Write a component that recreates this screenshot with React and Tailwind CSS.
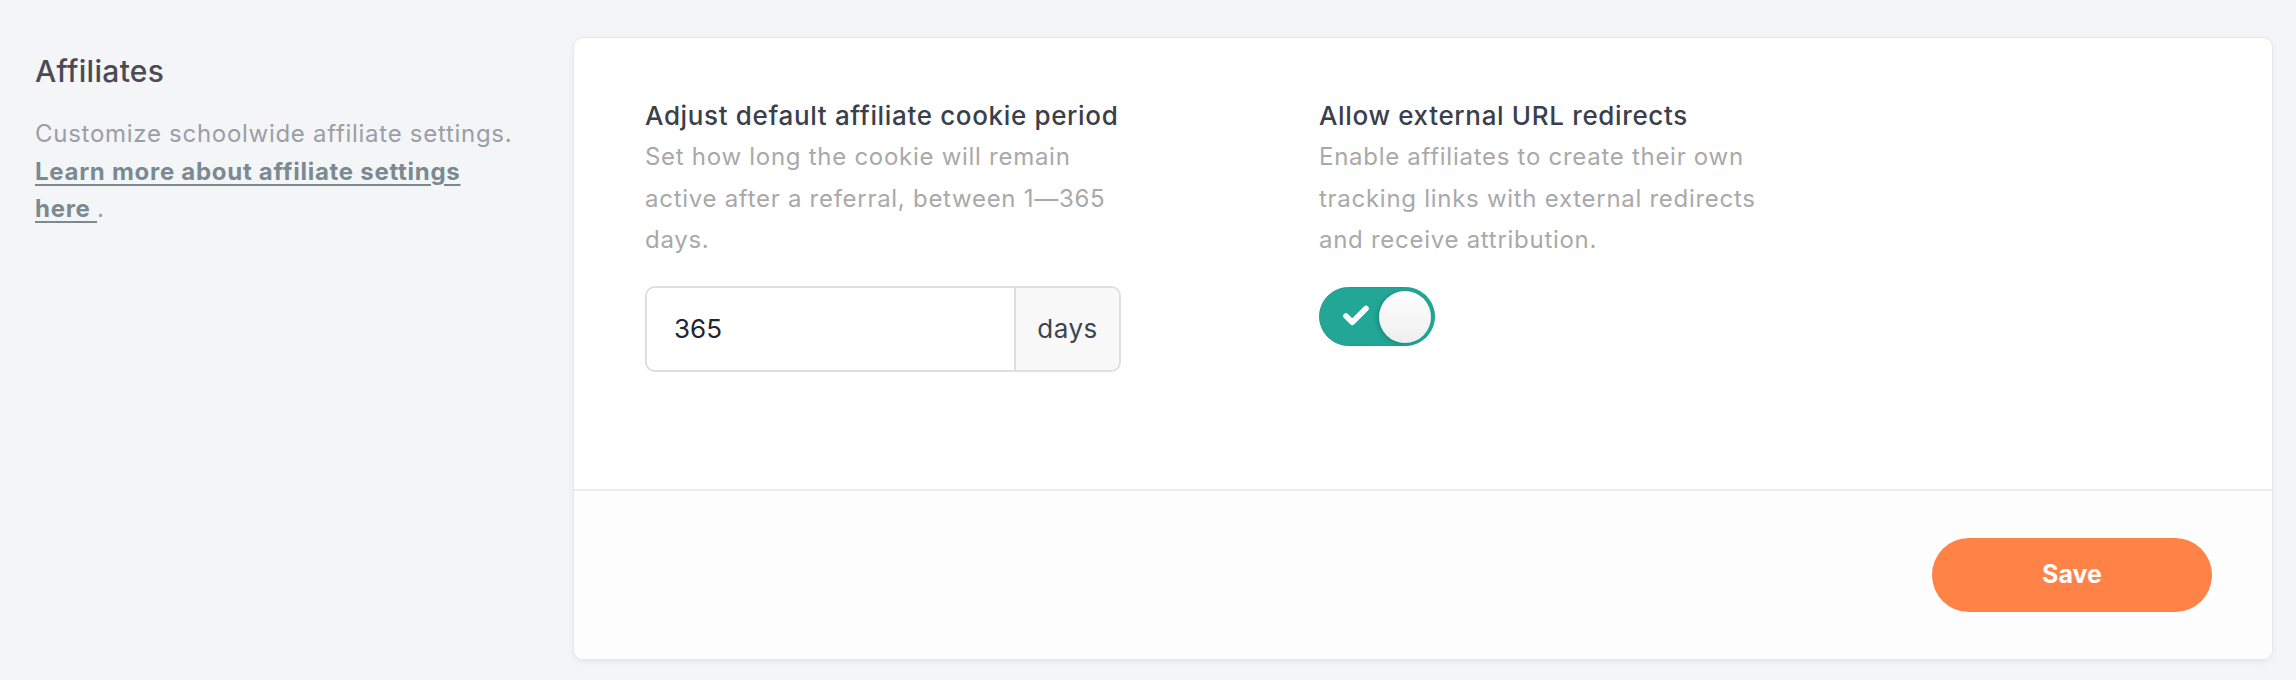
import { Check } from 'lucide-react';

export default function App() {
  return (
    <div
      className="min-h-screen bg-[#f4f5f7] flex pt-[37px] pl-[35px] pr-[23px] pb-[20px] text-[24px]"
      style={{ fontFamily: 'Inter, "Noto Sans", sans-serif' }}
    >
      {/* Section intro */}
      <div className="w-[500px] shrink-0 pt-[16px]">
        <h2 className="text-[30px] leading-[36px] font-medium text-[#4b4a55] tracking-[0.01em]">Affiliates</h2>
        <p className="mt-[26px] w-[486px] text-[24px] leading-[37.5px] text-[#9b9ea6] tracking-[0.03em]">
          Customize schoolwide affiliate settings.{' '}
          <a href="#" className="font-bold text-[#7b8a91] underline underline-offset-[4px] decoration-2">
            Learn more about affiliate settings here&nbsp;
          </a>
          .
        </p>
      </div>

      {/* Settings card */}
      <div className="ml-[38px] flex-1 flex flex-col bg-white rounded-[10px] border border-[#e6e7eb] shadow-[0_3px_6px_rgba(0,0,0,0.05)] overflow-hidden">
        <div className="grid grid-cols-[476px_476px] gap-x-[198px] px-[71px] pt-[61px] pb-[117px]">
          <div>
            <h3 className="text-[26px] leading-[34px] font-medium text-[#3a3f4b] tracking-[0.025em]">
              Adjust default affiliate cookie period
            </h3>
            <p className="mt-[3px] text-[24px] leading-[41.5px] text-[#a9a9a9] tracking-[0.03em]">
              Set how long the cookie will remain active after a referral, between 1—365 days.
            </p>
            <div className="mt-[25px] flex h-[86px] rounded-[10px] border-2 border-[#dedede] overflow-hidden">
              <input
                defaultValue="365"
                className="flex-1 min-w-0 pl-[27px] text-[26px] text-[#1f2430] outline-none bg-white"
              />
              <div className="w-[105px] flex items-center justify-center bg-[#f8f8f8] border-l-2 border-[#dedede] text-[26px] tracking-[0.02em] text-[#3d4451]">
                days
              </div>
            </div>
          </div>

          <div>
            <h3 className="text-[26px] leading-[34px] font-medium text-[#3a3f4b] tracking-[0.025em]">
              Allow external URL redirects
            </h3>
            <p className="mt-[3px] text-[24px] leading-[41.5px] text-[#a9a9a9] tracking-[0.03em]">
              Enable affiliates to create their own tracking links with external redirects and receive attribution.
            </p>
            <button className="mt-[26px] relative flex items-center w-[116px] h-[59px] rounded-full bg-[#22a797] border border-[#1f9b8c]">
              <Check className="ml-[21px] w-[30px] h-[30px] text-white" strokeWidth={4.5} />
              <span className="absolute right-[3px] top-[3px] w-[52px] h-[52px] rounded-full bg-gradient-to-b from-white to-[#eeeeee] shadow-[-2px_1px_4px_rgba(0,0,0,0.18)]" />
            </button>
          </div>
        </div>

        <div className="flex-1 flex items-center justify-end pr-[60px] bg-[#fdfdfd] border-t-2 border-[#ececec]">
          <button className="w-[280px] h-[74px] rounded-full bg-[#ff8247] text-white text-[25px] font-bold">
            Save
          </button>
        </div>
      </div>
    </div>
  );
}
